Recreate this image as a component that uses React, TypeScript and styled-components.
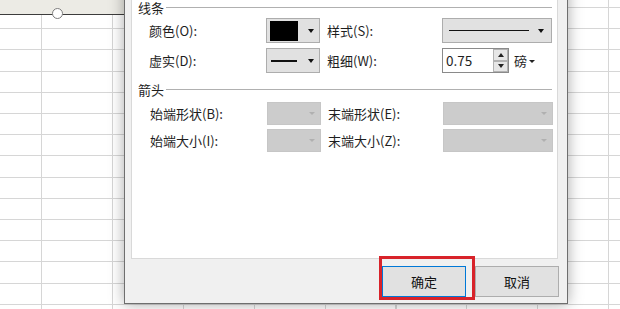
import React from 'react';
import styled, {createGlobalStyle} from 'styled-components';

const GlobalStyle = createGlobalStyle`
  html, body {
    margin: 0;
    padding: 0;
    overflow: hidden;
    background: #fff;
  }
`;

const FONT = `"Noto Sans CJK SC", "Noto Sans", sans-serif`;

// the worksheet behind the dialog: rows every 21.2px, columns every 70.9px
const Sheet = styled.div`
  position: relative;
  width: 620px;
  height: 309px;
  overflow: hidden;
  background-color: #fff;
  background-image:
    repeating-linear-gradient(to bottom, #d6d6d6 0 1px, transparent 1px 21.2px),
    repeating-linear-gradient(to right, #d6d6d6 0 1px, transparent 1px 70.9px);
  background-position: 0 7px, 41px 0;
  font-family: ${FONT};
`;

const ShapeBar = styled.div`
  position: absolute;
  left: 0;
  top: 0;
  width: 124px;
  height: 14px;
  background: #ecebe5;
  border-bottom: 1px solid #3c3c3c;
`;

const Handle = styled.span`
  position: absolute;
  left: 52px;
  top: 8px;
  width: 11px;
  height: 11px;
  border-radius: 50%;
  background: #fff;
  border: 1px solid #7d7d7d;
  box-sizing: border-box;
`;

const Dialog = styled.div`
  position: absolute;
  left: 124px;
  top: -22px;
  width: 444px;
  height: 326px;
  box-sizing: border-box;
  border: 1px solid #6e6e6e;
  background: #f0f0f0;
  box-shadow: 0 0 14px rgba(0, 0, 0, 0.34);
  display: flex;
  flex-direction: column;
`;

const Panel = styled.div`
  height: 280px;
  margin: 0 9px 0 6px;
  box-sizing: border-box;
  background: #fff;
  border: 1px solid #d9d9d9;
  border-top: none;
  padding: 21px 5px 0 6px;
  display: flex;
  flex-direction: column;
`;

const Section = styled.div<{$top?: number}>`
  display: flex;
  align-items: center;
  height: 15px;
  margin-top: ${p => p.$top ?? 0}px;
  font-size: 13px;
  line-height: 15px;
  color: #1e1e1e;
  white-space: nowrap;

  &::after {
    content: '';
    flex: 1;
    height: 1px;
    margin-left: 2px;
    background: #b0b0b0;
  }
`;

const Grid = styled.div<{$rowH: number; $gap: number; $top: number; $indent: number}>`
  display: grid;
  grid-template-columns: 117px 54px 122px 110px;
  grid-auto-rows: ${p => p.$rowH}px;
  row-gap: ${p => p.$gap}px;
  margin: ${p => p.$top}px 0 0 ${p => p.$indent}px;
  align-items: center;
`;

const Label = styled.span<{$second?: boolean}>`
  font-size: 13px;
  color: #1e1e1e;
  padding-left: ${p => (p.$second ? 7 : 0)}px;
  white-space: nowrap;
`;

const Drop = styled.div<{$disabled?: boolean; $wide?: boolean}>`
  height: 100%;
  box-sizing: border-box;
  display: flex;
  align-items: center;
  justify-content: space-between;
  padding: 0 ${p => (p.$wide ? 7 : 5)}px 0 ${p => (p.$wide ? 5 : 3)}px;
  background: ${p => (p.$disabled ? '#cccccc' : '#e1e1e1')};
  border: 1px solid ${p => (p.$disabled ? '#c6c6c6' : '#adadad')};
`;

const Caret = styled.span<{$color?: string; $w?: number}>`
  width: 0;
  height: 0;
  margin-left: auto;
  border-left: ${p => (p.$w ?? 7) / 2}px solid transparent;
  border-right: ${p => (p.$w ?? 7) / 2}px solid transparent;
  border-top: ${p => Math.round((p.$w ?? 7) * 0.55)}px solid ${p => p.$color ?? '#111'};
`;

const Swatch = styled.span`
  width: 28px;
  height: 20px;
  background: #000;
`;

const Stroke = styled.span<{$len: number; $thick: number}>`
  width: ${p => p.$len}px;
  height: ${p => p.$thick}px;
  margin-left: 1px;
  background: #111;
`;

const WeightCell = styled.div`
  display: flex;
  align-items: center;
  height: 100%;
`;

const Spin = styled.div`
  display: flex;
  height: 100%;
  box-sizing: border-box;
  border: 1px solid #8a8a8a;
  background: #fff;
`;

const SpinInput = styled.span`
  width: 50px;
  padding-left: 3px;
  box-sizing: border-box;
  font-size: 13.5px;
  line-height: 22px;
  color: #1e1e1e;
`;

const SpinButtons = styled.div`
  width: 15px;
  display: flex;
  flex-direction: column;
`;

const SpinButton = styled.span`
  flex: 1;
  display: flex;
  align-items: center;
  justify-content: center;
  background: #e6e6e6;
  border: 1px solid #b2b2b2;
  box-sizing: border-box;
`;

const TinyTri = styled.span<{$up?: boolean}>`
  width: 0;
  height: 0;
  border-left: 3px solid transparent;
  border-right: 3px solid transparent;
  ${p => (p.$up ? 'border-bottom: 4px solid #222;' : 'border-top: 4px solid #222;')}
`;

const Unit = styled.span`
  margin-left: 5px;
  font-size: 13px;
  color: #1e1e1e;
`;

const UnitCaret = styled.span`
  margin-left: 2px;
  margin-top: 1px;
  width: 0;
  height: 0;
  border-left: 3px solid transparent;
  border-right: 3px solid transparent;
  border-top: 3px solid #222;
`;

const Footer = styled.div`
  flex: 1;
  display: flex;
  justify-content: flex-end;
  align-items: flex-start;
  gap: 9px;
  padding: 7px 8px 0 0;
`;

const Button = styled.button<{$primary?: boolean}>`
  position: relative;
  width: 84px;
  height: 31px;
  margin: 0;
  padding: 0;
  background: #e1e1e1;
  border: 1px solid ${p => (p.$primary ? '#0078d7' : '#adadad')};
  font-family: ${FONT};
  font-size: 13px;
  color: #111;
`;

// red annotation frame drawn over the OK button
const Mark = styled.span`
  position: absolute;
  left: -4px;
  right: -10px;
  top: -11px;
  bottom: -4px;
  border: 3px solid #d8232a;
  pointer-events: none;
`;

export default function App() {
  return (
    <>
      <GlobalStyle/>
      <Sheet>
        <ShapeBar>
          <Handle/>
        </ShapeBar>
        <Dialog>
          <Panel>
            <Section>线条</Section>
            <Grid $rowH={25} $gap={5} $top={3} $indent={11}>
              <Label>颜色(O):</Label>
              <Drop>
                <Swatch/>
                <Caret/>
              </Drop>
              <Label $second>样式(S):</Label>
              <Drop $wide>
                <Stroke $len={80} $thick={1}/>
                <Caret/>
              </Drop>
              <Label>虚实(D):</Label>
              <Drop>
                <Stroke $len={26} $thick={2}/>
                <Caret/>
              </Drop>
              <Label $second>粗细(W):</Label>
              <WeightCell>
                <Spin>
                  <SpinInput>0.75</SpinInput>
                  <SpinButtons>
                    <SpinButton><TinyTri $up/></SpinButton>
                    <SpinButton><TinyTri/></SpinButton>
                  </SpinButtons>
                </Spin>
                <Unit>磅</Unit>
                <UnitCaret/>
              </WeightCell>
            </Grid>
            <Section $top={9}>箭头</Section>
            <Grid $rowH={23} $gap={4} $top={5} $indent={12}>
              <Label>始端形状(B):</Label>
              <Drop $disabled><Caret $color="#b0b0b0" $w={6}/></Drop>
              <Label $second>末端形状(E):</Label>
              <Drop $disabled><Caret $color="#b0b0b0" $w={6}/></Drop>
              <Label>始端大小(I):</Label>
              <Drop $disabled><Caret $color="#b0b0b0" $w={6}/></Drop>
              <Label $second>末端大小(Z):</Label>
              <Drop $disabled><Caret $color="#b0b0b0" $w={6}/></Drop>
            </Grid>
          </Panel>
          <Footer>
            <Button $primary>
              确定
              <Mark/>
            </Button>
            <Button>取消</Button>
          </Footer>
        </Dialog>
      </Sheet>
    </>
  );
}
